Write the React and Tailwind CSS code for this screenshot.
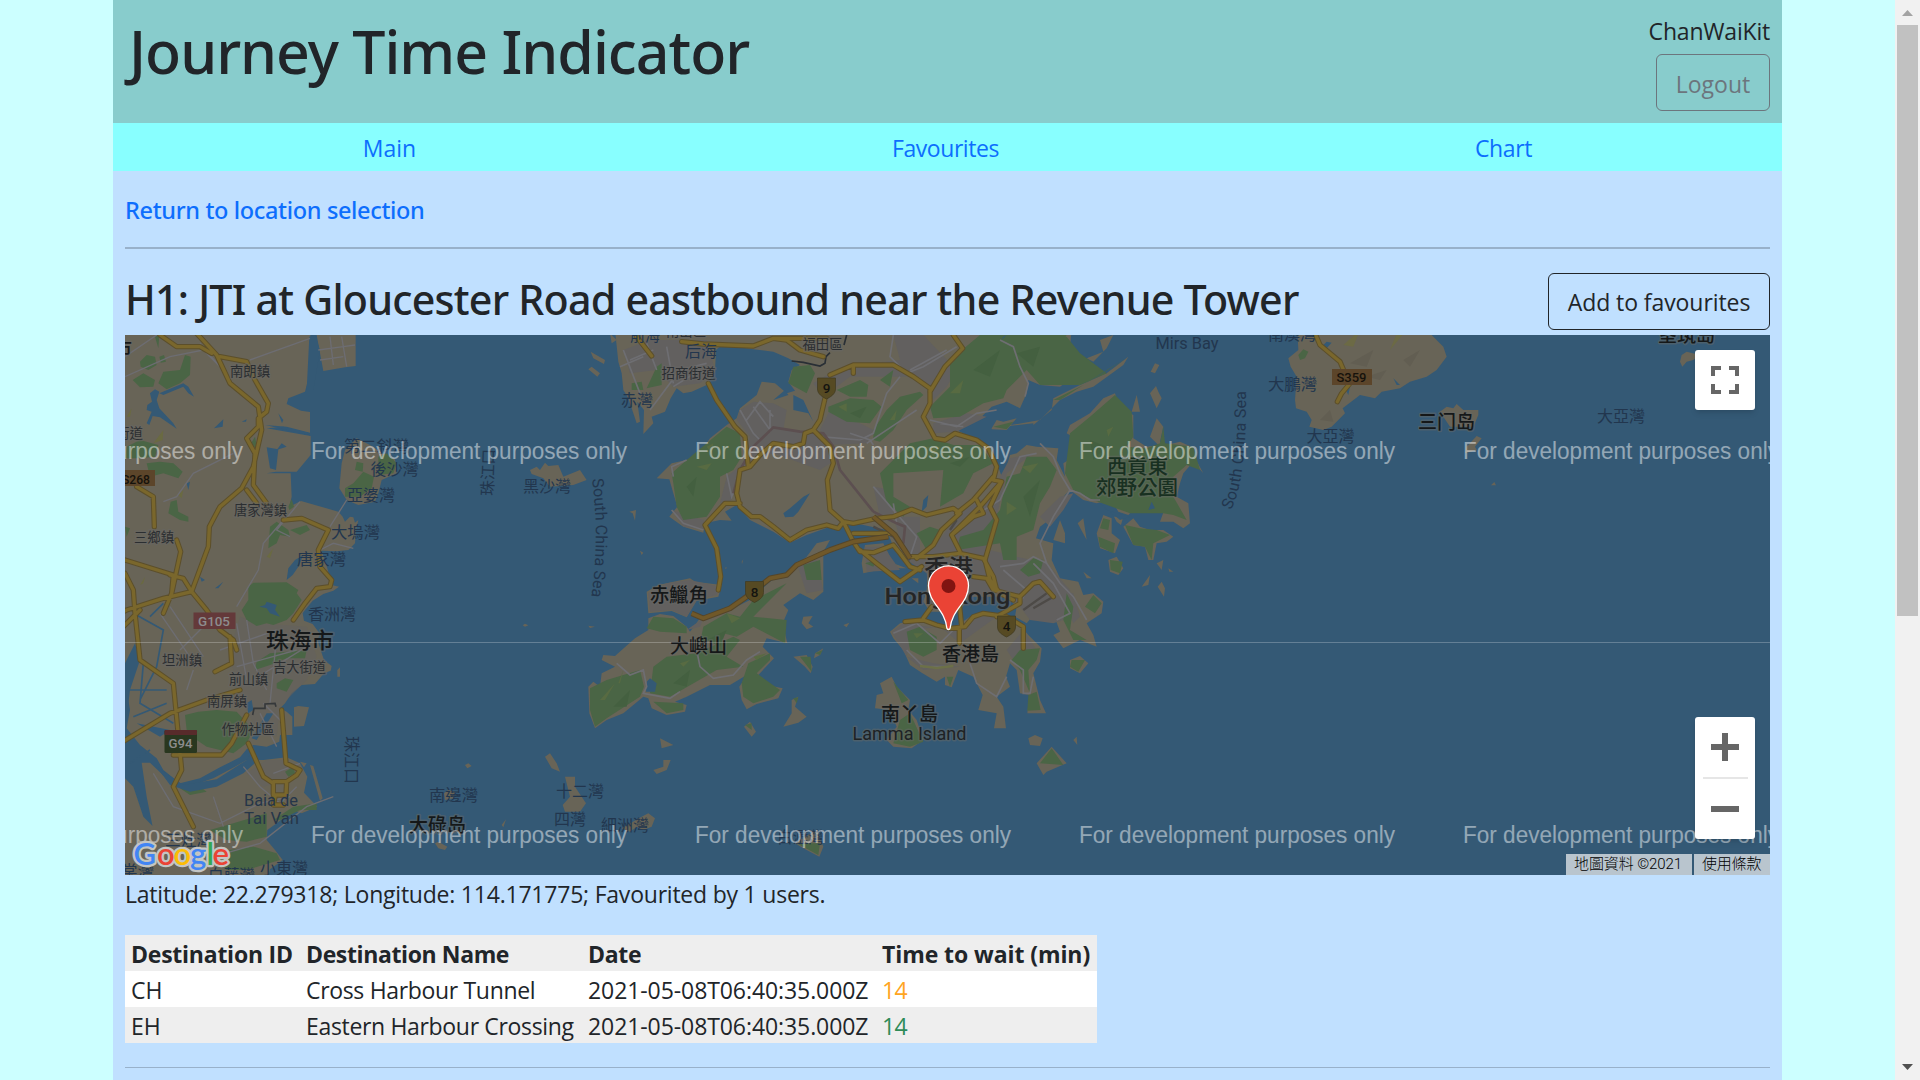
import React from 'react';

const WATER = '#345975';
const LAND = '#686457';
const URBAN = '#62605f';
const PARK = '#4a6545';

/* Western shore of the estuary, in thirds of a pixel */
const westLand = [
  'M0 0H570L577 100 555 185 505 205 500 222 543 242 570 246V310L490 290 440 295 572 318V375L530 425 468 425 440 430 512 430 515 500 508 530 543 513 655 545 668 560 675 575 690 560 700 562 705 578 715 570 708 600 705 640 685 660 650 664 605 662 622 715 635 765 657 770 640 782 610 792 578 812 555 840 548 850 552 872 578 882 600 912 592 930 612 990 635 1008 632 1022 612 1030 585 1062 545 1065 515 1090 495 1120 480 1135 500 1145 517 1160V1215L480 1215 478 1235 440 1250 400 1245 380 1258 360 1282 300 1312 240 1345 180 1360 130 1320 110 1285 60 1245 20 1195 30 1140 20 1080 35 1050 0 1080Z',
  'M65 1298 90 1298 150 1355 200 1372 280 1345 345 1310 380 1290 430 1290 500 1282 540 1300 562 1340 552 1388 592 1430 545 1450 520 1440 470 1480 442 1500 440 1530 465 1560 488 1590 450 1618 440 1660H225L150 1600 100 1500 80 1400Z',
  'M0 1330 40 1370 70 1460 130 1520 210 1640 190 1660H0Z',
  'M522 1132 535 1128 567 1132 552 1188 522 1190Z',
  'M570 1305 580 1308 608 1405 600 1412Z',
  'M590 15H707V108L676 112 610 123Z',
  'M665 400 675 360 710 325 750 345 790 372 825 388 830 430 785 450 775 490 765 515 715 525 680 510 658 475Z',
  'M652 1020 660 1012 660 1040 652 1040Z M540 1295 560 1300 552 1312Z',
  'M1230 420 1250 410 1260 420 1275 398 1285 408 1315 405 1330 440 1380 420 1400 450 1360 465 1290 470 1270 445 1235 432Z',
  'M1035 1305 1045 1300 1055 1308 1042 1315Z M1208 886 1215 881 1225 886 1215 890Z',
  'M972 1390 985 1380 1005 1385 1000 1405 975 1410Z',
  'M945 1540 955 1535 982 1550 975 1560 955 1555Z M1145 1485 1158 1468 1150 1492Z',
];
const westPark = [
  'M60 95 80 75 105 80 110 105 85 120 62 110Z M38 150 70 130 105 150 100 170 60 172Z M115 160 130 125 180 120 195 75 212 80 210 135 180 160 140 178Z M118 80 132 75 138 95 122 98Z M105 20 118 15 115 55Z',
  'M20 350 60 330 115 345 105 380 60 385 15 385Z M80 400 120 395 160 400 188 425 175 445 130 430 90 440Z',
  'M145 550 152 515 170 510 175 545 205 560 205 575 180 570Z M450 590 470 575 505 600 510 620 480 615 470 640 445 655Z M510 600 560 585 570 600 540 615Z',
  'M385 770 400 758 500 757 535 780 530 790 545 810 520 850 500 870 460 885 440 880 410 888 380 870 365 840 385 810Z',
  'M710 395 730 400 728 425 705 420Z M700 460 730 425 762 440 755 475 720 500 675 500 675 475Z M775 380 800 370 830 400 820 430 775 435Z',
  'M195 1155 235 1145 290 1140 350 1145 400 1200 380 1240 340 1270 260 1250 230 1230 200 1200Z',
  'M410 995 450 970 500 965 560 960 555 985 500 985 450 1005 405 1020Z M470 1060 495 1045 520 1050 500 1085 470 1075Z',
  'M340 1480 440 1450 440 1520 380 1535 320 1530 270 1500Z M460 1470 520 1430 590 1420 590 1440 540 1440 480 1470Z M330 1560 400 1550 470 1570 480 1590 380 1620 320 1620 290 1580Z M495 1325 520 1310 525 1330 505 1340Z',
  'M180 1375 240 1370 260 1385 210 1395Z M390 345 405 320 412 355Z M15 590 30 595 20 620Z M505 530 515 508 522 530 508 540Z',
];
const westWater = [
  'M568 20 585 15 600 60 580 180 560 180Z',
  'M90 190 105 178 118 185 110 210 118 235 160 280 170 296 120 262 98 258 88 285 80 280 95 245 80 240 82 225 96 215Z M118 190 190 160 205 170 222 200 205 190 190 170 130 195Z',
  'M436 285 500 290 570 308 570 316 500 300Z M440 352 475 358 468 420 450 415Z M475 250 490 270 486 280Z M470 360 485 340 500 350Z',
  'M505 715 525 690 550 675 535 710 518 735 500 750Z M418 830 435 825 440 815 470 825 465 840 480 860 450 850 440 835Z M282 295 310 268 308 290Z M285 775 310 755 295 775Z M240 740 255 750 245 755Z M200 460 210 455 205 480Z M365 275 380 268 378 275Z',
  'M15 1000 45 940 60 990 30 1080 15 1200Z M50 1180 150 1200 120 1220Z',
  'M110 1310 190 1365 290 1348 380 1290 395 1270 410 1295 370 1330 290 1370 210 1385 150 1365Z',
  'M395 1225 440 1150 460 1150 410 1230Z M380 1120 395 1110 400 1140 385 1150Z',
];
const minorWest = [
  'M15 140 150 80 250 60 300 110 240 40M390 90 570 25M15 80 110 15M130 515 170 500 220 430 340 370M490 570 430 640 415 720 350 830M540 515 470 600 510 620M680 510 630 590M600 660 640 640 700 655',
  'M120 850 230 1010M150 830 250 980M180 960 270 870M220 1020 200 1080M350 880 380 1050M380 870 400 1000 440 1080M300 960 470 900M350 1010 530 960M400 1050 560 950M470 920 450 1120M420 1150 470 1250M430 1120 490 1180M370 1310 420 1370 480 1420 530 1370M100 1330 160 1430 300 1480 420 1420 510 1400M280 1400 310 1490M460 1330 540 1300M280 1580 420 1540 560 1430 640 1400',
  'M595 60 670 50 705 45M600 90 670 80M630 20 640 105M665 20 680 110',
];
const roadsWest = [
  'M230 10 290 75 330 160 415 230 425 300 400 410 365 475 300 530 268 590 265 650 215 785 130 805 20 840 0 850',
  'M120 15 170 50 240 50 275 70 M300 80 380 95 405 150 445 220 440 245 415 265 415 290 380 325 405 370 400 465 440 520 M380 480 410 520M490 570 545 565 625 600 595 660 600 710 635 750 630 770 590 775 555 820 520 870',
  'M50 470 100 500 103 590M170 630 182 665 155 790 160 735 15 690M150 735 190 745 215 785 260 840 300 900 340 930 350 960M15 730 40 780 45 850 60 990 160 1060 185 1320 160 1370 220 1490M0 900 60 840M155 790 130 850M330 920 335 1000 285 1025',
  'M0 1240 150 1150 260 1110 360 1080M160 1275 305 1275 335 1240 380 1155M485 1140 498 1300 540 1320 530 1335 500 1355 498 1395 460 1395 460 1355 500 1355M385 1240 430 1340 460 1360M465 1400 460 1425 490 1425',
];

/* Pearl River east bank, Hong Kong and its islands, in thirds of a pixel */
const eastLand = [
  'M225 0 235 95 245 130 250 180 265 205 290 280 300 275 292 215 312 240 310 312 340 280 335 260 375 245 392 205 410 175 430 190 455 185 500 165 525 125 528 60 545 45 640 58 700 65 745 85 780 105 755 120 745 155 765 182 740 190 705 160 665 155 650 195 600 235 590 265 560 285 510 325 480 370 440 390 395 400 350 445 388 448 400 490 412 530 388 560 430 590 490 608 495 580 540 570 575 572 555 545 590 525 630 570 700 605 750 638 800 615 870 590 925 575 1040 600 1060 650 1085 690 1130 690 1165 690 1160 780 1150 815 1170 845 1225 845 1265 835 1290 800 1400 800 1430 830 1425 860 1460 880 1510 820 1540 850 1560 905 1540 915 1570 955 1620 930 1670 950 1660 915 1640 880 1685 850 1690 815 1660 790 1630 795 1615 755 1560 745 1535 690 1540 640 1488 625 1500 590 1540 560 1570 500 1590 480 1630 510 1670 520 1715 510 1735 545 1765 555 1790 530 1812 545 1830 520 1835 500 1880 520 1860 575 1900 575 1930 595 1950 580 1945 520 1910 500 1920 460 1930 430 1960 395 1990 430 1960 375 1965 355 1920 335 1880 345 1860 335 1870 290 1850 265 1830 320 1855 345 1820 350 1780 325 1780 255 1740 235 1725 190 1690 205 1650 250 1590 285 1580 310 1605 325 1610 375 1570 400 1575 440 1550 390 1555 355 1490 350 1460 345 1430 370 1410 375 1395 430 1385 440 1365 380 1340 345 1280 315 1250 300 1250 290 1320 265 1355 230 1400 215 1440 235 1460 190 1465 150 1500 165 1560 170 1595 145 1560 125 1600 115 1560 90 1590 50 1595 0Z',
  'M1385 290 1480 280 1480 285 1535 240 1540 205 1620 165 1700 130 1765 80 1750 105 1660 170 1610 185 1560 210 1500 270Z',
  'M320 785 355 765 450 745 465 755 545 765 535 800 470 812 440 862 395 843 325 850Z',
  'M325 900 325 865 360 852 400 858 440 890 450 905 480 865 550 850 630 810 690 755 750 720 800 680 830 640 870 630 850 665 850 785 820 810 780 790 730 825 745 840 728 880 742 940 680 925 668 950 702 985 650 1040 680 1065 728 1075 715 1105 650 1122 620 1138 605 1110 598 1070 620 1035 570 1065 510 1065 440 1100 405 1115 440 1125 435 1145 380 1155 335 1135 325 1105 310 1100 250 1150 200 1170 165 1195 148 1150 145 1070 160 1055 180 1070 185 1030 225 1010 185 990 190 975 225 978 285 925Z',
  'M1050 905 1080 880 1130 870 1200 890 1240 895 1290 860 1350 850 1440 885 1465 915 1505 955 1500 995 1480 1030 1500 1110 1518 1150 1462 1150 1468 1095 1440 1090 1430 1020 1410 1000 1398 1040 1410 1070 1370 1100 1390 1130 1398 1195 1362 1195 1370 1150 1315 1140 1328 1095 1300 1040 1255 1020 1235 1072 1215 1065 1215 1040 1190 1055 1145 1028 1110 1005 1090 960 1060 925Z',
  'M1020 1060 1055 1040 1070 1070 1110 1110 1105 1140 1130 1170 1150 1230 1115 1255 1060 1250 1040 1230 1070 1190 1050 1140 1005 1135 1010 1095 1030 1090Z',
  'M975 645 1030 640 1060 700 1100 715 1040 715 970 730 965 700Z M1115 745 1135 745 1135 760Z',
  'M760 980 800 975 818 1010 812 1030 795 1010Z M825 970 850 955 840 975 822 985Z M755 1110 775 1100 765 1130 800 1160 775 1178 730 1190 755 1150Z M790 860 818 858 805 880 820 890 800 898 785 880Z M612 1190 630 1175 648 1205 635 1220Z M910 885 928 878 920 892Z M145 887 165 890 150 894Z',
  'M15 1280 30 1270 50 1300 60 1325 35 1315Z M75 1340 105 1340 105 1370 138 1420 120 1445 75 1445 68 1425 90 1400Z M305 1460 325 1450 345 1465 335 1490 310 1500 290 1490 270 1505 245 1495Z M340 1320 370 1310 370 1290 392 1290 380 1320 350 1332Z M360 1225 400 1245 365 1255Z',
  'M765 1540 830 1500 850 1550 838 1580 790 1555Z M1465 1225 1485 1215 1508 1225 1500 1248 1470 1245Z M1490 1300 1535 1250 1580 1300 1520 1325 1510 1335Z',
  'M1590 990 1620 978 1645 1000 1620 1030 1590 1015Z M1600 1230 1610 1220 1612 1245Z',
  'M1670 610 1690 555 1715 565 1715 610 1740 630 1725 670 1680 655Z M1705 690 1730 680 1750 715 1735 735 1710 725Z M1540 630 1560 570 1575 610 1575 640Z M1613 580 1630 565 1640 630Z M1630 725 1655 745 1640 745Z',
  'M1750 590 1780 565 1800 590 1830 600 1870 600 1900 620 1880 635 1850 640 1840 690 1825 690 1815 650 1780 645Z',
  'M1722 560 1750 560 1743 585 1730 575Z M1805 770 1830 735 1825 765Z M1853 770 1865 755 1875 775 1872 800Z M1850 700 1870 690 1865 720Z M1885 715 1900 725 1888 725Z',
  'M1640 85 1690 65 1680 30 1720 15 1700 55 1660 95Z M1832 125 1845 100 1858 105 1845 130Z M1830 190 1848 168 1855 185 1865 205 1850 235Z M1775 245 1790 195 1800 245Z',
  'M268 545 288 540 285 572 278 550Z M300 662 310 668 305 675Z M152 65 195 90 192 102 160 85Z M145 118 155 110 180 130 172 140Z M210 10 230 30 215 40Z M555 713 560 712 558 718Z M605 695 610 688 606 703Z',
  'M1355 295 1370 270 1390 275 1430 265 1400 300 1355 298Z',
];
const urban = [
  'M250 60 330 30 500 30 525 120 480 160 400 170 350 120 270 130Z',
  'M600 240 640 215 700 220 740 240 730 300 840 310 860 350 900 380 840 420 700 370 640 390 620 420 590 440 570 520 540 520 560 440 610 400 630 320 590 270Z',
  'M890 15H1060L1080 90 950 105 870 130 820 160 850 200 930 140 1140 140 1180 210 1220 170 1250 120 1150 15H1000Z',
  'M870 240 940 270 1000 300 980 340 870 345 840 300Z M1000 470 1060 480 1060 580 1020 560Z M1180 280 1280 250 1340 260 1250 305 1180 310Z',
  'M1060 560 1140 560 1140 680 1190 640 1260 550 1340 500 1380 440 1410 385 1480 370 1400 430 1370 560 1350 660 1430 680 1520 700 1590 780 1600 860 1540 880 1470 870 1410 790 1280 800 1260 840 1170 840 1160 730 1100 690Z',
  'M395 540 430 590 500 600 490 570Z M325 790 380 760 450 750 540 770 530 795 470 810 440 860 395 840 330 845Z M1055 905 1090 880 1240 900 1320 860 1370 860 1260 940 1200 890 1120 900 1110 940 1100 980 1180 1000 1260 1010 1150 1020 1100 980Z',
  'M1500 560 1560 500 1600 490 1570 540 1530 590Z M1400 960 1450 900 1490 960 1420 990Z M770 700 830 690 850 780 800 790Z M440 900 490 865 480 890Z M1560 780 1600 790 1620 860 1600 880Z M975 650 1030 650 1080 720 980 725Z',
];
const eastPark = [
  'M560 290 600 310 605 380 580 420 540 440 540 500 500 560 430 570 410 530 400 460 395 430 440 390 500 340Z',
  'M760 110 810 105 825 130 800 190 745 160Z M890 180 960 150 985 165 980 200 930 200Z M865 230 930 205 1000 210 1025 230 990 280 920 275 865 245Z M1000 300 1040 240 1080 200 1140 185 1150 195 1100 240 1060 300 1020 335 1000 330Z M1020 150 1060 120 1050 170Z',
  'M1230 90 1320 15H1580L1550 60 1590 80 1530 130 1460 120 1400 180 1390 205 1330 220 1260 260 1180 265 1170 230 1230 170Z',
  'M1020 430 1110 340 1180 325 1240 345 1320 345 1360 400 1300 430 1270 490 1200 530 1210 420 1060 430 1060 500 1110 530 1090 560 1040 520Z M1130 610 1170 590 1200 600 1190 640 1160 660Z',
  'M1440 430 1460 380 1520 380 1550 420 1530 470 1500 520 1480 600 1430 620 1430 690 1390 690 1380 640 1250 660 1260 620 1330 600 1380 540 1400 440Z M1440 720 1480 685 1510 690 1500 730 1465 740Z',
  'M1380 20H1580L1620 70 1700 130 1620 165 1500 165 1460 120 1450 60Z M1540 210 1630 165 1760 85 1700 120 1560 210Z',
  'M1590 310 1650 260 1725 195 1775 245 1780 320 1760 350 1820 355 1860 340 1870 290 1875 340 1960 350 1980 420 1940 405 1900 440 1900 500 1940 570 1900 555 1870 550 1770 550 1660 510 1600 480 1575 430Z',
  'M1675 620 1725 640 1720 670 1680 650Z M1690 565 1710 570 1705 600 1680 595Z M1710 690 1748 695 1740 730 1712 720Z M1755 585 1800 595 1850 600 1890 615 1840 640 1835 690 1815 650 1780 645Z M1635 830 1660 795 1685 820 1665 850Z M1580 790 1600 830 1590 900 1640 930 1600 930 1570 870Z',
  'M340 860 400 865 440 890 440 910 360 905 320 895Z M490 890 560 850 600 860 640 810 740 760 660 840 640 860 740 870 735 940 640 890 590 920 550 910 480 940Z M790 705 840 690 845 750 800 750Z',
  'M380 980 470 970 580 920 600 930 560 980 610 1010 530 1020 390 1100 330 1090 340 1010Z M625 1000 690 970 690 990 650 1030 720 1080 700 1100 640 1120 610 1100 605 1060Z M150 1075 200 1050 300 1020 312 1070 300 1100 200 1165 165 1190 150 1140Z M340 1115 430 1120 430 1140 380 1150Z',
  'M1100 905 1140 890 1190 920 1190 960 1150 980 1110 960Z M1415 990 1440 960 1500 955 1490 990 1465 1020 1470 1090 1440 1020Z M1465 1095 1490 1085 1502 1140 1462 1142Z M1220 1040 1240 1040 1230 1070Z M1060 1055 1080 1080 1105 1110 1085 1120Z M1080 1170 1110 1150 1150 1235 1110 1250 1060 1240Z',
  'M780 980 812 980 815 1025Z M825 970 848 960 840 975Z M760 1105 775 1102 770 1120Z M1500 1300 1535 1255 1570 1305Z M1595 990 1635 990 1615 1025 1590 1010Z M770 1540 840 1540 835 1575Z M350 110 365 100 365 165 320 175Z M275 160 305 155 310 180 275 180Z M975 700 1010 690 1000 710Z',
  'M1360 290 1420 275 1400 298Z M615 1185 635 1180 635 1200Z',
];
const highlight = 'M470 410 515 400 500 420Z M500 350 520 340 515 370Z M895 230 920 220 920 245Z M1050 270 1070 240 1065 270Z M1400 515 1430 535 1400 555Z M1160 350 1200 350 1180 380Z M1230 190 1270 150 1260 190Z M1445 410 1495 400 1470 430Z M180 1110 225 1060 195 1110Z M235 1060 250 1020 240 1060Z M560 850 600 865 575 880Z M1120 910 1150 910 1130 925Z M1700 300 1720 290 1705 320Z M420 1000 450 990 430 1010Z M640 980 680 970 650 990Z';
const eastWater = [
  'M730 550 750 535 790 500 810 490 775 545 760 560 735 562Z M1145 545 1150 510 1165 495 1160 530Z M320 1055 330 1045 350 1060 345 1085 318 1085Z',
  'M760 195 790 210 820 275 805 250 760 240Z M1385 30 1400 15 1390 20Z M700 210 735 180 745 195Z',
  'M1660 500 1700 540 1770 560 1740 570 1680 520Z M1825 540 1835 515 1845 535Z',
];
const minorEast = [
  'M250 60 300 190M270 90 340 60M240 110 310 80M320 40 350 120M380 50 400 160M330 240 420 120 500 100M400 170 480 120',
  'M600 240 640 310 660 330M620 270 660 215 700 260M640 230 690 300 690 240M560 430 575 500 600 440M840 320 960 330 1000 310 1040 190 1080 140M980 340 1100 260 1130 240M930 310 990 330 1000 345M1060 15 1050 80 1100 130 1150 110 1250 50M1110 120 1220 60M1170 270 1250 290 1310 250 1370 240M1200 280 1270 290M400 440 395 410 440 390M395 540 430 580 490 600',
  'M1000 470 1060 540 1130 620 1110 680M1060 520 1070 580M1300 560 1380 510 1440 380 1490 370M1380 30 1420 50 1440 110 1465 160 1455 200M1500 340 1540 380 1560 430 1590 480 1620 490 1650 510 1680 510',
  'M1590 480 1540 560 1520 600 1500 640 1520 700 1560 760 1600 800 1640 870M1380 710 1450 700 1480 680 1520 700M1390 720 1460 780 1440 820M1480 700 1540 760 1590 850 1550 870',
  'M470 960 480 1010 520 1045 580 1035 620 990 660 965M230 1000 270 1035 310 1020 320 1070 310 1090 390 1105 420 1085M1060 910 1130 880 1200 940 1240 900M1290 1000 1310 1060 1370 1100 1400 1040M1410 990 1450 1020 1450 1090 1470 1090 1480 1040M1100 960 1150 1010 1220 1010',
];
const roadsEast = [
  'M290 20 335 78M425 35 490 42 640 48 700 25 740 30 780 60 850 80M700 25H860M505 160 530 210 585 290 615 320 625 410M1240 15 1268 55 1215 110 1170 185',
  'M940 130 940 105 1060 105 1120 140 1170 175 1170 220 1150 260 1185 325 1215 330 1245 310 1310 330 1345 355 1370 410 1360 450 1385 455 1320 530 1235 615 1260 665',
  'M870 135 940 105M855 205 840 270 820 300 795 310 790 340 760 350 700 340 660 375 630 410 600 420 590 490 600 530 635 560 660 560 700 590 750 630 800 600 860 585 895 595 910 575 940 580 1010 565 1060 560 1115 538 1160 555 1240 535 1260 550 1205 600 1180 645 1130 685',
  'M820 300 870 350 880 400 862 450 870 540 910 575 940 635 960 665 1000 668 1060 645 1080 670 1110 710 1140 720',
  'M600 520 555 520 495 585 530 655 542 740 535 780M940 610 1050 610M960 660 1010 700 1080 755 1145 710M1385 455 1350 530 1370 570 1335 690 1350 750 1380 790 1420 810',
  'M1115 680 1180 680 1260 670 1330 685 1360 740 1370 780M1300 740 1340 745 1360 780 1440 800 1480 760 1500 755 1540 800M1250 550 1300 510 1360 440M1235 615 1300 560 1330 550 1310 510',
  'M1095 875 1150 870 1190 885 1230 895 1275 890 1300 860 1330 850 1400 860 1450 890 1450 955M1150 865 1175 830M1265 890 1258 820M1258 895 1258 940M1440 800 1440 820 1370 860',
];
const trunkEast = 'M455 850 490 865 570 835 620 800 690 745 740 735 770 705 870 660 940 635 1045 620 M1000 560 1065 615 1110 685';

const southeastLand = [
  'M-8 0 -5 60 -35 85 -28 110 -10 140 -15 210 -12 235 20 245 35 270 28 290 70 300 95 290 135 250 128 235 180 195 225 205 245 185 300 175 330 155 380 140 410 120 440 80 430 50 380 0Z',
  'M420 245 440 230 460 235 470 222 490 240 535 240 535 255 520 290 470 290 450 290Z',
  'M500 350 530 318 545 325 525 350 530 360 495 370Z M573 466 583 456 588 466Z',
  'M1140 95 1145 75 1160 65 1200 75 1180 90 1160 95 1147 110Z',
];

const darkLabels = [
  [266, 648, 22, 68, '珠海市', '#151819'],
  [650, 601.5, 19.5, 58, '赤鱲角', '#151819'],
  [722 - 52, 652.5, 19.5, 57, '大嶼山', '#151819'],
  [924, 577, 24, 49, '香港', '#252525'],
  [942, 661, 19.5, 57, '香港島', '#151819'],
  [881, 721, 19.5, 57, '南丫島', '#151819'],
  [409, 831.5, 19.5, 57, '大碌岛', '#151819'],
  [1418, 429, 19.5, 57, '三门岛', '#151819'],
  [1658, 342, 19.5, 57, '垦筑岛', '#151819'],
  [1107, 474, 20.5, 61, '西貢東', '#183021'],
  [1096, 495, 20.5, 82, '郊野公園', '#183021'],
  [113, 355, 18, 19, '市', '#17191a'],
];
const townLabels = [
  [230, 375.5, 13.5, 40, '南朗鎮'],
  [234, 515, 13.5, 53, '唐家灣鎮'],
  [134, 542, 13.5, 40, '三鄉鎮'],
  [116, 438, 13.5, 27, '街道'],
  [162, 664.5, 13.5, 40, '坦洲鎮'],
  [273, 672, 13.5, 53, '吉大街道'],
  [229, 683.5, 13.5, 39, '前山鎮'],
  [207, 706, 13.5, 40, '南屏鎮'],
  [221.5, 733.5, 13.5, 53, '作物社區'],
  [661.5, 377.5, 13.5, 54, '招商街道'],
  [802.5, 349, 13.5, 40, '福田區'],
  [666, 336, 13.5, 40, '南山區'],
];
const seaLabels = [
  [344, 452, 16, 65, '第二斜灣'],
  [370.5, 474.5, 16, 48, '後沙灣'],
  [347, 501, 16, 48, '亞婆灣'],
  [331, 537.5, 16, 49, '大塢灣'],
  [297, 564.5, 16, 49, '唐家灣'],
  [308, 620, 16, 48, '香洲灣'],
  [523, 491.5, 16, 48, '黑沙灣'],
  [429, 800.5, 16, 49, '南邊灣'],
  [556, 797, 16, 48, '十二灣'],
  [554, 825, 16, 32, '四灣'],
  [601, 830.5, 16, 48, '細洲灣'],
  [777, 843, 16, 47, '白瀝灣'],
  [165, 846, 16, 47, '三灶灣'],
  [260, 873.5, 16, 48, '小東灣'],
  [208, 881, 16, 47, '白藤灣'],
  [121, 877, 16, 33, '棠灣'],
  [621, 405.5, 16, 32, '赤灣'],
  [685, 357, 16, 32, '后海'],
  [630, 340.5, 16, 30, '前海'],
  [1268, 389.5, 16, 49, '大鵬灣'],
  [1306.5, 441.5, 16, 48, '大亞灣'],
  [1597, 421.5, 16, 48, '大亞灣'],
  [1268, 339.5, 16, 48, '南澳灣'],
];

function Roads({ list }) {
  const d = list.join('');
  return (
    <g fill="none" strokeLinejoin="round" strokeLinecap="round">
      <path d={d} stroke="#5c4f2b" strokeWidth="16" />
      <path d={d} stroke="#7a672c" strokeWidth="10" />
    </g>
  );
}

function Label({ x, y, size, w, children, color, halo, weight }) {
  return (
    <text
      x={x} y={y} fontSize={size} textLength={w} lengthAdjust="spacingAndGlyphs" fill={color} fontWeight={weight || 400}
      stroke={halo || 'none'} strokeWidth={halo ? 3 : 0} strokeLinejoin="round" paintOrder="stroke"
    >
      {children}
    </text>
  );
}

function Shield({ x, y, children }) {
  return (
    <g>
      <path d={`M${x - 9} ${y - 10}h18v11c0 5-5 8-9 10c-4-2-9-5-9-10z`} fill="#564a23" stroke="#3f3a20" strokeWidth="0.7" />
      <text x={x} y={y + 5} fontSize="13.5" fontWeight="500" textAnchor="middle" fill="#141410">{children}</text>
    </g>
  );
}

function GoogleLogo() {
  const letters = [['G', 133.5, '#4285f4'], ['o', 157, '#ea4335'], ['o', 173.5, '#fbbc05'], ['g', 190, '#4285f4'], ['l', 206.5, '#34a853'], ['e', 212.5, '#ea4335']];
  return (
    <g fontFamily="Lato, sans-serif" fontSize="31" fontWeight="600">
      {letters.map(([c, x], i) => (
        <text key={'o' + i} x={x} y="864.5" stroke="#c3c5c3" strokeWidth="4.5" strokeLinejoin="round" fill="#c3c5c3">{c}</text>
      ))}
      {letters.map(([c, x, fill], i) => (
        <text key={i} x={x} y="864.5" fill={fill}>{c}</text>
      ))}
    </g>
  );
}

function MapCanvas() {
  return (
    <svg className="block h-[540px] w-[1645px]" viewBox="125 335 1645 540" fontFamily="Roboto, 'Noto Sans CJK TC', sans-serif">
      <defs>
        <path id="seaWest" d="M592 479Q600 540 591 598" />
        <path id="seaEast" d="M1231 510Q1247 480 1246 388" />
      </defs>
      <rect x="125" y="335" width="1645" height="540" fill={WATER} />
      <g transform="translate(120 330) scale(0.33333)">
        <path d={westLand.join('')} fill={LAND} />
        <path d="M360 860 420 880 560 890 590 980 560 1050 480 1130 470 1220 400 1180 350 1080 330 960Z M440 1290 500 1290 500 1350 430 1370 380 1330Z" fill={URBAN} opacity="0.55" />
        <path d={westPark.join('')} fill={PARK} />
        <path d={westWater.join('')} fill={WATER} />
        <path d="M100 340 130 300 128 330Z M20 260 35 235 30 260Z M60 765 75 740 70 760Z M175 495 190 480 185 505Z M440 680 460 655 450 685Z" fill="#6a6a42" />
        <path d={minorWest.join('')} fill="none" stroke="#6d6d72" strokeWidth="4" />
        <path d="M40 850 130 900 110 1010 60 1110M20 1080 140 1080M70 1000 60 1120 160 1180M90 860 130 820M40 1160 140 1120M30 1300 90 1260" fill="none" stroke={WATER} strokeWidth="5" />
        <path d="M398 1155 402 1135 435 1135 435 1122 465 1120 468 1130" fill="none" stroke="#35383a" strokeWidth="5" />
        <Roads list={roadsWest} />
      </g>
      <g transform="translate(540 330) scale(0.33333)">
        <path d={eastLand.join('')} fill={LAND} strokeLinejoin="round" />
        <path d={urban.join('')} fill={URBAN} />
        <path d={eastPark.join('')} fill={PARK} />
        <path d={highlight} fill="#586b42" />
        <path d="M440 470 470 440 460 500Z M1300 120 1380 60 1350 140Z M1430 70 1500 50 1480 110Z M1650 330 1700 350 1660 390Z M1720 420 1770 380 1780 430Z M1450 500 1500 450 1470 560Z M500 930 560 900 540 950Z M400 1060 450 1020 440 1070Z M220 1130 270 1080 260 1130Z M930 250 980 230 960 265Z M1230 400 1290 380 1260 410Z" fill="#446040" />
        <path d={eastWater.join('')} fill={WATER} />
        <path d={minorEast.join('')} fill="none" stroke="#6e6e72" strokeWidth="5" />
        <path d="M580 490 600 420 640 350 700 292 780 305 850 310 880 350 900 420 1000 545M1000 545 1070 580 1095 590 1090 640" fill="none" stroke="#5c4f50" strokeWidth="8" />
        <path d="M1110 690 1060 620 1000 590M1230 600 1250 570M1450 840 1520 790M1480 835 1540 800" fill="none" stroke="#4d4a47" strokeWidth="7" />
        <path d="M755 93 790 97 840 108 855 100 858 80 870 68M920 15 912 45" fill="none" stroke="#292f35" strokeWidth="5" />
        <Roads list={roadsEast} />
        <path d={trunkEast} fill="none" stroke="#55462a" strokeWidth="17" strokeLinejoin="round" />
        <path d={trunkEast} fill="none" stroke="#705829" strokeWidth="11" strokeLinejoin="round" />
        <path d="M1140 1008 1190 1014 1240 1008" fill="none" stroke="#6c7048" strokeWidth="7" />
      </g>
      <g transform="translate(1300 330) scale(0.33333)">
        <path d={southeastLand.join('')} fill={LAND} />
        <path d="M130 45 180 0 160 50Z M270 60 290 10 320 0Z" fill="#6c6a45" />
        <path d="M150 100 220 60 200 110Z M310 90 360 60 330 110Z M60 270 90 240 100 275Z M200 140 260 120 240 150Z" fill="#625e52" />
        <path d="M-5 75 10 58 25 65 15 85 0 90Z" fill={PARK} />
        <path d="M70 45 80 35 95 38 80 55Z M280 145 300 165 290 165Z M135 175 150 170 145 195Z" fill={WATER} />
        <Roads list={['M45 10 60 45 120 95 135 130M150 160 125 190 112 215']} />
      </g>

      <rect x="121" y="470" width="34" height="16" fill="#5c452a" />
      <Label x={122} y={483.5} size={13.5} w={28} color="#16120c" weight={500}>S268</Label>
      <rect x="1332" y="369" width="40" height="16" fill="#5c452a" />
      <Label x={1336.5} y={382} size={13.5} w={30} color="#16120c" weight={500}>S359</Label>
      <rect x="193.500" y="612.500" width="42" height="16.500" fill="#64393a" />
      <Label x={198} y={625.5} size={13} w={32} color="#8d8d8d" weight={500}>G105</Label>
      <rect x="164.500" y="730" width="32.500" height="23" rx="1.500" fill="#29371f" />
      <rect x="164.500" y="730" width="32.500" height="5" rx="1" fill="#582b2b" />
      <Label x={168.5} y={748} size={13} w={24} color="#8d8d8d" weight={500}>G94</Label>
      <Shield x={826.5} y={388}>9</Shield>
      <Shield x={754.5} y={591.5}>8</Shield>
      <Shield x={1006.5} y={626}>4</Shield>

      {seaLabels.map(([x, y, s, w, t], i) => (
        <Label key={i} x={x} y={y} size={s} w={w} color="#22364e">{t}</Label>
      ))}
      {townLabels.map(([x, y, s, w, t], i) => (
        <Label key={i} x={x} y={y} size={s} w={w} color="#2b2e31" halo="#67666399">{t}</Label>
      ))}
      {darkLabels.map(([x, y, s, w, t, c], i) => (
        <Label key={i} x={x} y={y} size={s} w={w} color={c} halo="#66686677" weight={500}>{t}</Label>
      ))}
      <Label x={884.5} y={604} size={21.5} w={126} color="#252525" halo="#66646388" weight={500}>Hong Kong</Label>
      <Label x={852.5} y={739.5} size={18} w={114} color="#1e2224" halo="#66686677" weight={400}>Lamma Island</Label>
      <Label x={1155.5} y={349} size={16} w={63} color="#22364e">Mirs Bay</Label>
      <Label x={244} y={805.5} size={16} w={54} color="#263649">Baia de</Label>
      <Label x={244} y={824} size={16} w={55} color="#263649">Tai Van</Label>
      <text fontSize="16" fill="#22364e" textLength="118"><textPath href="#seaWest">South China Sea</textPath></text>
      <text fontSize="16" fill="#22364e" textLength="121"><textPath href="#seaEast">South China Sea</textPath></text>
      <g transform="translate(493 496) rotate(-88)"><Label x={0} y={0} size={16} w={47} color="#22364e">珠江口</Label></g>
      <g transform="translate(346 736) rotate(90)"><Label x={0} y={0} size={16} w={48} color="#22364e">珠江口</Label></g>

      <rect x="125" y="642" width="1645" height="1" fill="#ffffff" opacity="0.24" />
      <g fill="#ffffff" opacity="0.47" fontFamily="'Liberation Sans', Arial, sans-serif" fontSize="23.500">
        {[458.5, 842.5].map((y) =>
          [-73, 311, 695, 1079, 1463].map((x) => (
            <text key={x + '-' + y} x={x} y={y} textLength="316" lengthAdjust="spacingAndGlyphs">For development purposes only</text>
          ))
        )}
      </g>
      <path d="M948.500 629.500c-.9 0-1.500-.6-1.700-1.700-1.500-18-18.300-25-18.300-42a20 20 0 0 1 40 0c0 17-16.800 24-18.300 42-.2 1.100-.8 1.700-1.700 1.700z" fill="#ea4335" stroke="#ffffff" strokeWidth="1.300" />
      <circle cx="948.500" cy="586" r="7" fill="#811411" />
      <GoogleLogo />
    </svg>
  );
}

function MapView() {
  return (
    <div className="relative h-[540px] w-full overflow-hidden">
      <MapCanvas />
      <button className="absolute right-[15px] top-[15px] flex size-[60px] items-center justify-center rounded-[3px] bg-white shadow-md">
        <svg className="size-7" viewBox="0 0 28 28" fill="none" stroke="#666666" strokeWidth="4">
          <path d="M2 10V2H10M18 2H26V10M26 18V26H18M10 26H2V18" />
        </svg>
      </button>
      <div className="absolute bottom-[36px] right-[15px] flex h-[122px] w-[60px] flex-col items-center rounded-[3px] bg-white shadow-md">
        <button className="flex h-[60px] items-center justify-center">
          <svg className="size-7" viewBox="0 0 28 28" fill="none" stroke="#666666" strokeWidth="6"><path d="M0 14H28M14 0V28" /></svg>
        </button>
        <div className="h-0.5 w-[45px] bg-[#e6e6e6]" />
        <button className="flex h-[60px] items-center justify-center">
          <svg className="size-7" viewBox="0 0 28 28" fill="none" stroke="#666666" strokeWidth="6"><path d="M0 14H28" /></svg>
        </button>
      </div>
      <div className="absolute bottom-0 right-0 flex gap-0.5 font-[Roboto,'Noto_Sans_CJK_TC',sans-serif] text-[15px] font-light leading-[21px] text-black">
        <span className="w-[126px] whitespace-nowrap bg-[#b9c5ce] pl-2 tracking-[-0.1px]">地圖資料 ©2021</span>
        <span className="w-[76px] whitespace-nowrap bg-[#b9c5ce] pl-2 tracking-[-0.2px]">使用條款</span>
      </div>
    </div>
  );
}

const rows = [
  ['CH', 'Cross Harbour Tunnel', '2021-05-08T06:40:35.000Z', '14', 'bg-white', 'text-[#ffa51f]'],
  ['EH', 'Eastern Harbour Crossing', '2021-05-08T06:40:35.000Z', '14', 'bg-[#eeeeee]', 'text-[#2e8b57]'],
];

function WaitTable() {
  return (
    <table className="mt-[23px] w-[972px] table-fixed border-collapse text-left leading-[34px]">
      <colgroup>
        <col className="w-[175px]" />
        <col className="w-[282px]" />
        <col className="w-[294px]" />
        <col className="w-[221px]" />
      </colgroup>
      <thead>
        <tr className="h-9 whitespace-nowrap bg-[#eeeeee] font-bold">
          <th className="pb-0 pl-1.5 pt-0.5 tracking-[-0.24px]">Destination ID</th>
          <th className="pb-0 pl-1.5 pt-0.5 tracking-[-0.38px]">Destination Name</th>
          <th className="pb-0 pl-1.5 pt-0.5 tracking-[-0.3px]">Date</th>
          <th className="pb-0 pl-1.5 pt-0.5 tracking-[-0.08px]">Time to wait (min)</th>
        </tr>
      </thead>
      <tbody>
        {rows.map(([id, name, date, wait, bg, color]) => (
          <tr key={id} className={`h-9 whitespace-nowrap ${bg}`}>
            <td className="pb-0 pl-1.5 pt-0.5">{id}</td>
            <td className="pb-0 pl-1.5 pt-0.5 tracking-[-0.33px]">{name}</td>
            <td className="pb-0 pl-1.5 pt-0.5 tracking-[-0.08px]">{date}</td>
            <td className={`pb-0 pl-1.5 pt-0.5 tracking-[-0.6px] ${color}`}>{wait}</td>
          </tr>
        ))}
      </tbody>
    </table>
  );
}

export default function App() {
  return (
    <div className="flex h-[1080px] w-[1920px] overflow-hidden bg-[#ccffff] font-['Open_Sans','Noto_Sans',sans-serif] text-[23px] leading-9 text-[#212529]">
      <div className="ml-[113px] flex w-[1669px] flex-col bg-[#c0e0ff]">
        <header className="flex h-[123px] shrink-0 justify-between bg-[#88cccc] pl-4 pr-3">
          <h1 className="pt-[15px] font-['Noto_Sans',sans-serif] text-[59px] font-medium leading-[72px] tracking-[-1px]">Journey Time Indicator</h1>
          <div className="flex flex-col items-end pt-[13px]">
            <span className="tracking-[-0.2px]">ChanWaiKit</span>
            <button className="mt-[5px] h-[57px] w-[114px] rounded-md border border-[#6c757d] pt-0.5 text-[#6c757d]">Logout</button>
          </div>
        </header>
        <nav className="grid h-12 shrink-0 grid-cols-[553px_559px_557px] items-center bg-[#88ffff] text-center text-[#0d6efd]">
          <a className="pt-0.5">Main</a>
          <a className="pt-0.5 tracking-[-0.44px]">Favourites</a>
          <a className="pt-0.5 tracking-[-0.4px]">Chart</a>
        </nav>
        <main className="flex flex-col px-3">
          <a className="mt-[21px] font-['Noto_Sans',sans-serif] text-[23.5px] font-medium tracking-[-0.35px] text-[#0d6efd]">Return to location selection</a>
          <div className="mt-[19px] h-0.5 bg-[#98b1ca]" />
          <div className="mt-6 flex h-[62px] justify-between">
            <h2 className="whitespace-nowrap pt-px font-['Noto_Sans',sans-serif] text-[41.2px] font-medium leading-[50px] tracking-[-0.77px]">
              H1: JTI at Gloucester Road eastbound near the Revenue Tower
            </h2>
            <button className="h-[57px] w-[222px] rounded-md border border-[#212529] pt-px tracking-[-0.08px]">Add to favourites</button>
          </div>
          <MapView />
          <p className="mt-px tracking-[-0.22px]">Latitude: 22.279318; Longitude: 114.171775; Favourited by 1 users.</p>
          <WaitTable />
          <div className="mt-6 h-px bg-[#98b1ca]" />
        </main>
      </div>
      <div className="ml-auto flex w-[25px] flex-col items-center bg-[#f1f1f1]">
        <svg className="mt-2.5 h-1.5 w-[11px]" viewBox="0 0 11 6"><path d="M0 6L5.500 0L11 6Z" fill="#a3a3a3" /></svg>
        <div className="mt-[9px] h-[591px] w-[21px] bg-[#c1c1c1]" />
        <svg className="mb-2.5 mt-auto h-1.5 w-[11px]" viewBox="0 0 11 6"><path d="M0 0L5.500 6L11 0Z" fill="#505050" /></svg>
      </div>
    </div>
  );
}
